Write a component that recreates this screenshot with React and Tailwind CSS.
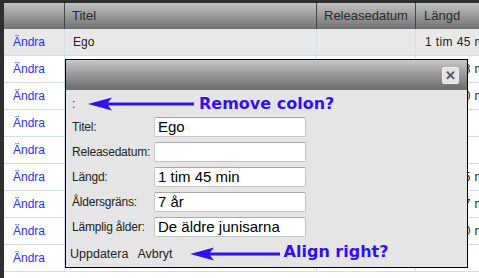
const rows = [
  { title: "Ego", length: "1 tim 45 min" },
  { title: "", length: "1 tim 33 min" },
  { title: "", length: "1 tim 30 min" },
  { title: "", length: "95 min" },
  { title: "", length: "92 min" },
  { title: "", length: "1 tim 35 min" },
  { title: "", length: "1 tim 37 min" },
  { title: "", length: "1 tim 40 min" },
  { title: "", length: "88 min" },
];

const fields = [
  { label: "Titel:", value: "Ego" },
  { label: "Releasedatum:", value: "" },
  { label: "Längd:", value: "1 tim 45 min" },
  { label: "Åldersgräns:", value: "7 år" },
  { label: "Lämplig ålder:", value: "De äldre junisarna" },
];

function Arrow({ width }) {
  return (
    <svg width={width} height="14" viewBox={`0 0 ${width} 14`} className="block">
      <path d={`M0 7 L24 0.5 L20 5.5 L${width} 5.5 L${width} 8.5 L20 8.5 L24 13.5 Z`} fill="#3311ee" />
    </svg>
  );
}

export default function App() {
  return (
    <div className="relative h-[278px] w-[479px] overflow-hidden bg-white font-['Liberation_Sans',Arial,sans-serif] text-[12px] text-[#222]">
      <div className="flex h-full border-l-[4px] border-t-[3px] border-[#2e2e2e]">
        <div className="flex min-w-0 flex-1 flex-col">
          <div className="grid h-[26px] grid-cols-[61px_252px_99px_1fr] bg-gradient-to-b from-[#c2c2c2] to-[#727272] text-[13px] text-[#2a2a2a]">
            <div className="border-r border-[#454545]" />
            <div className="flex items-center border-r border-[#454545] pl-[7px]">Titel</div>
            <div className="flex items-center border-r border-[#454545] pl-[7px]">Releasedatum</div>
            <div className="flex items-center pl-[8px]">Längd</div>
          </div>
          {rows.map((row, i) => (
            <div
              key={i}
              className={`grid h-[27px] shrink-0 grid-cols-[61px_252px_99px_1fr] border-b border-[#d6dcec] ${i === 0 ? "bg-[#e8e8e8]" : "bg-white"}`}
            >
              <div className="flex items-center border-r border-[#d6dcec] pl-[9px] text-[#2f2ff5]">Ändra</div>
              <div className="flex items-center border-r border-[#d6dcec] pl-[8px]">{row.title}</div>
              <div className="border-r border-[#d6dcec]" />
              <div className="flex items-center whitespace-nowrap pl-[9px] tracking-[0.4px]">{row.length}</div>
            </div>
          ))}
        </div>
      </div>

      <div className="absolute left-[65px] top-[59px] flex h-[209px] w-[403px] flex-col border border-black bg-[#e5e5e5]">
        <div className="flex h-[30px] items-center justify-end bg-gradient-to-b from-[#c8c8c8] to-[#6a6a6a] pr-[8px]">
          <div className="flex h-[17px] w-[17px] items-center justify-center rounded-[2px] border border-[#f0f0f0] bg-[#e4e4e4] text-[13px] font-bold leading-none text-[#555]">
            ✕
          </div>
        </div>
        <div className="flex flex-col pl-[6px]">
          <div className="flex h-[27px] items-center">
            <span className="w-[16px]">:</span>
            <Arrow width={106} />
            <span className="ml-[5px] font-['DejaVu_Sans',Verdana,sans-serif] text-[16px] font-bold text-[#3311ee]">Remove colon?</span>
          </div>
          <div className="flex flex-col gap-[5px]">
            {fields.map((f) => (
              <div key={f.label} className="flex items-center">
                <span className="w-[82px] whitespace-nowrap tracking-[-0.2px]">{f.label}</span>
                <div className="flex h-[20px] w-[152px] items-center rounded-[2px] border border-[#c4c4c4] border-t-[#a8a8a8] bg-white pl-[3px] text-[15px] text-black">
                  {f.value}
                </div>
              </div>
            ))}
          </div>
          <div className="mt-[7px] flex items-center text-[12.5px]">
            <span className="ml-[-2px]">Uppdatera</span>
            <span className="ml-[9px]">Avbryt</span>
            <span className="ml-[17px]">
              <Arrow width={90} />
            </span>
            <span className="ml-[4px] mt-[-4px] font-['DejaVu_Sans',Verdana,sans-serif] text-[16px] font-bold text-[#3311ee]">Align right?</span>
          </div>
        </div>
      </div>
    </div>
  );
}
